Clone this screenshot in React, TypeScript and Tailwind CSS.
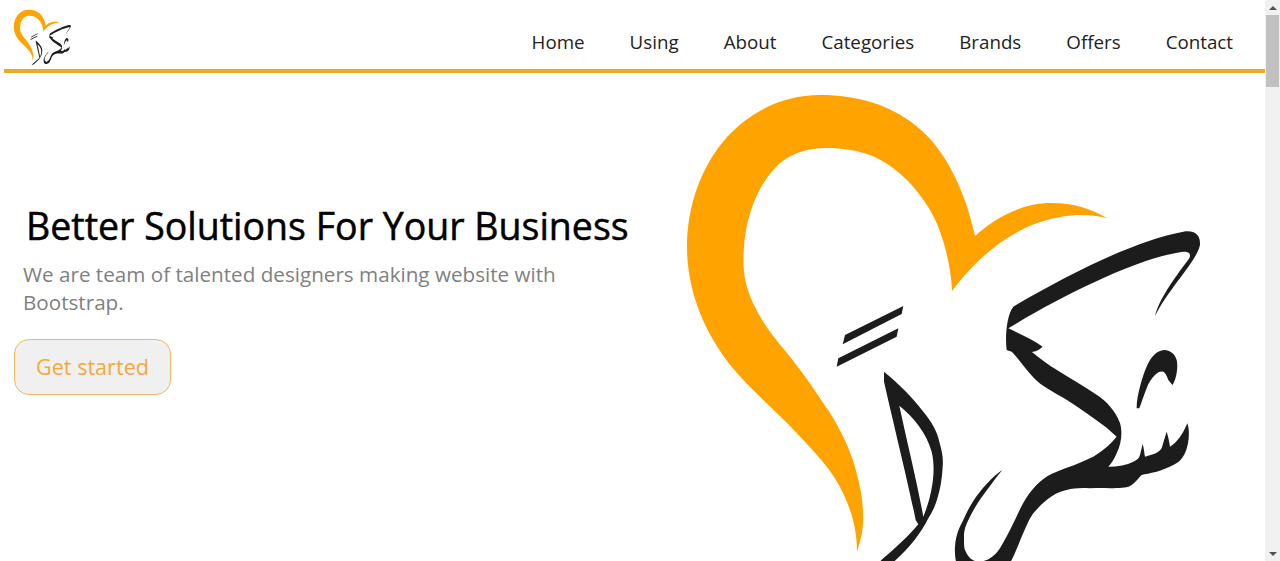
const navLinks = ["Home", "Using", "About", "Categories", "Brands", "Offers", "Contact"];

const Logo = ({ className }: { className: string }) => (
  <svg className={className} viewBox="680 90 530 500" fill="none">
    {/* heart */}
    <path
      fill="#ffa300"
      d="M857 552 C857 530 852 510 840 487 C830 468 815 452 787 423 C770 406 755 393 737 373 C708 340 687 295 687 247 C687 205 702 165 727 137 C752 110 785 95 820 95 C858 95 890 105 915 125 C945 148 965 190 975 236 C990 222 1015 205 1047 203 C1070 202 1090 208 1107 218 C1085 213 1065 214 1040 222 C1005 234 975 260 952 291 C951 262 941 228 930 210 C915 185 895 165 870 155 C855 150 842 148 827 148 C810 148 790 152 775 168 C758 186 746 215 744 247 C742 270 745 285 753 303 C762 322 772 335 787 353 C805 375 818 395 830 413 C842 432 850 450 855 467 C860 485 863 500 863 513 C864 530 860 542 857 552 Z"
    />
    <g transform="translate(820 190) scale(0.3333)" fill="#1c1c1c">
      {/* madda bars */}
      <path d="M75 435 L250 348 L245 372 L68 463 Z" />
      <path d="M55 505 L235 415 L230 440 L50 530 Z" />
      {/* shin dot */}
      <path d="M950 655 C950 630 955 610 960 590 C968 560 978 530 990 510 C1003 490 1018 480 1035 480 C1055 482 1066 495 1070 510 C1075 530 1070 565 1058 585 C1052 580 1050 575 1045 570 C1040 555 1035 547 1030 545 C1020 542 1012 548 1005 555 C995 565 985 580 980 595 C970 620 964 640 958 655 Z" />
      {/* alef lam */}
      <path
        fillRule="evenodd"
        d="M192 545 C235 580 280 625 310 665 C335 695 352 725 358 755 C368 790 370 810 368 830 C366 865 362 890 355 915 C347 945 338 965 325 985 C300 1035 260 1085 210 1125 C180 1150 150 1175 120 1200 L80 1200 C115 1170 160 1135 190 1105 C225 1075 265 1040 295 1003 L287 990 C265 880 225 720 192 575 Z M238 647 C280 680 320 730 335 785 C345 825 340 870 335 895 C330 925 322 950 310 980 C290 870 262 760 238 647 Z"
      />
      {/* kaf, shin and ra */}
      <path d="M580 350 C750 250 950 150 1090 125 C1125 120 1142 135 1140 165 C1130 215 1050 290 1005 378 C1020 320 1075 250 1108 205 C1115 190 1105 183 1085 186 C950 205 720 320 565 415 C600 432 640 450 668 470 C655 482 645 484 636 486 C660 505 690 528 711 540 C750 565 795 590 831 615 C860 635 885 660 900 699 C908 725 905 760 890 790 C882 808 875 820 865 830 C895 830 920 825 940 815 C950 810 958 805 960 795 L968 762 C972 775 973 790 975 800 C995 795 1015 790 1025 775 L1040 725 C1045 740 1048 755 1050 770 C1070 760 1090 730 1102 700 C1110 720 1108 760 1095 790 C1085 810 1075 818 1060 825 C1040 835 1025 840 1010 845 C990 850 975 852 965 855 C950 870 945 880 930 888 C910 898 860 893 810 895 C780 893 760 895 740 900 C715 905 695 918 680 930 C660 945 650 960 640 970 C625 990 615 1020 605 1040 C595 1065 585 1090 575 1110 C555 1150 490 1190 440 1170 C410 1155 403 1100 405 1070 C408 1030 420 1010 430 990 C445 955 460 930 480 905 C500 880 525 855 547 840 C530 860 505 895 490 915 C475 935 460 960 450 980 C437 1005 432 1020 432 1040 C432 1060 432 1070 435 1080 C445 1105 465 1125 500 1110 C515 1105 530 1090 540 1075 C555 1050 568 1025 580 1000 C592 975 603 950 615 930 C630 905 645 888 660 875 C675 862 690 853 710 845 C745 832 780 820 810 805 C840 790 870 765 890 740 C870 722 860 712 849 705 C815 680 780 655 741 630 C705 608 665 590 639 561 C615 535 595 505 576 486 C570 483 565 482 560 480 C555 440 560 375 580 350 Z" />
    </g>
  </svg>
);

export default function App() {
  return (
    <div className="flex h-[561px] overflow-hidden bg-white font-['Open_Sans',sans-serif]">
      <div className="w-[1265px] shrink-0">
        <header className="ml-1 flex h-[73px] items-end justify-between border-b-[4px] border-[#eda920]">
          <Logo className="mb-[4px] ml-[9px] h-[56px] w-[59px]" />
          <nav className="mr-[32px] mb-[14px] flex gap-[45px] text-[18.75px] leading-[26px] text-[#222]">
            {navLinks.map((link) => (
              <a key={link} href="#">
                {link}
              </a>
            ))}
          </nav>
        </header>

        <main className="flex">
          <section className="w-[676px] shrink-0 pt-[129px] pl-[14px]">
            <h1 className="ml-[12px] text-[37.5px] leading-[48px] font-medium whitespace-nowrap text-black [-webkit-text-stroke:0.5px_black]">
              Better Solutions For Your Business
            </h1>
            <p className="mt-[10px] ml-[9px] w-[570px] text-[20.65px] leading-[28px] text-[#808080]">
              We are team of talented designers making website with Bootstrap.
            </p>
            <button className="mt-[23px] h-[56px] w-[157px] rounded-[15px] border border-[#f3b65c] bg-[#f0f0f0] text-[21.6px] text-[#f5a83a]">
              Get started
            </button>
          </section>
          <Logo className="mt-[17px] ml-[4px] h-[500px] w-[530px] shrink-0" />
        </main>
      </div>

      {/* scrollbar */}
      <aside className="flex w-[15px] flex-col items-center bg-[#f1f1f1]">
        <div className="flex h-[15px] items-center">
          <div className="h-0 w-0 border-x-[4px] border-b-[4px] border-x-transparent border-b-[#505050]" />
        </div>
        <div className="h-[72px] w-[13px] bg-[#c1c1c1]" />
        <div className="flex-1" />
        <div className="flex h-[15px] items-center">
          <div className="h-0 w-0 border-x-[4px] border-t-[4px] border-x-transparent border-t-[#505050]" />
        </div>
      </aside>
    </div>
  );
}
